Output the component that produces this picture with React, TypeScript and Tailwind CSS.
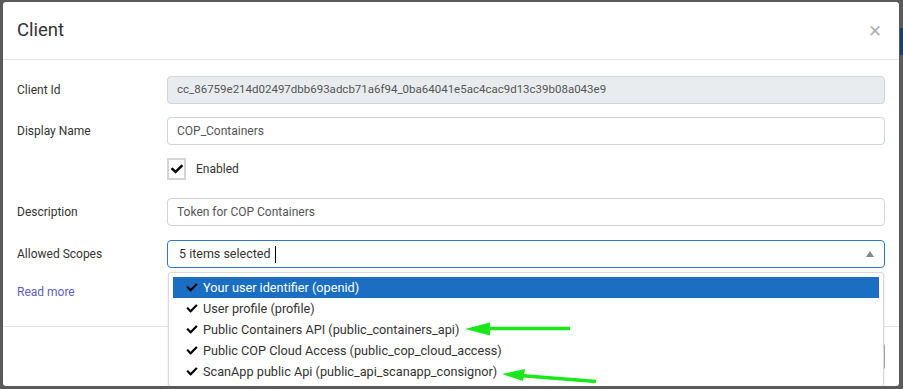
import { FaCheck } from "react-icons/fa";

const scopes = [
  "Your user identifier (openid)",
  "User profile (profile)",
  "Public Containers API (public_containers_api)",
  "Public COP Cloud Access (public_cop_cloud_access)",
  "ScanApp public Api (public_api_scanapp_consignor)",
];

const Field = ({ label, children }: { label: string; children: React.ReactNode }) => (
  <div className="flex items-center">
    <label className="w-[150px] shrink-0 text-[12px] text-[#333]">{label}</label>
    <div className="flex-1">{children}</div>
  </div>
);

const App = () => {
  return (
    <div
      className="relative w-[903px] h-[389px] overflow-hidden bg-[#5a5a5a] pl-[3px] pt-[2px]"
      style={{ fontFamily: 'Roboto, "Noto Sans", sans-serif' }}
    >
      {/* page behind the modal */}
      <div className="absolute right-0 top-[28px] h-[27px] w-[3px] bg-[#1d3f66]" />

      <div className="relative w-[896px] h-[384px] bg-white rounded-[3px] overflow-hidden">
        <div className="flex h-[58px] items-center justify-between border-b border-[#e5e5e5] pl-[14px] pr-[18px]">
          <h4 className="text-[18.5px] text-[#333]">Client</h4>
          <span className="text-[22px] leading-none text-[#b3b3b3]">×</span>
        </div>

        <div className="flex flex-col px-[14px] pt-[16px] h-[267px] border-b border-[#e5e5e5]">
          <Field label="Client Id">
            <div className="flex h-[28px] items-center rounded-[4px] border border-[#ced4da] bg-[#e9ecef] px-[9px] text-[11.5px] text-[#555]">
              cc_86759e214d02497dbb693adcb71a6f94_0ba64041e5ac4cac9d13c39b08a043e9
            </div>
          </Field>

          <div className="mt-[13px]">
            <Field label="Display Name">
              <div className="flex h-[28px] items-center rounded-[4px] border border-[#ced4da] px-[9px] text-[12px] text-[#555]">
                COP_Containers
              </div>
            </Field>
          </div>

          <div className="mt-[13px] flex h-[22px] items-center pl-[150px]">
            <div className="flex h-[22px] w-[19px] items-center justify-center border-2 border-[#d4d4d4]">
              <FaCheck className="h-[12px] w-[12px] text-black" />
            </div>
            <span className="ml-[10px] text-[12px] text-[#333]">Enabled</span>
          </div>

          <div className="mt-[18px]">
            <Field label="Description">
              <div className="flex h-[28px] items-center rounded-[4px] border border-[#ced4da] px-[9px] text-[12px] text-[#555]">
                Token for COP Containers
              </div>
            </Field>
          </div>

          <div className="mt-[14px]">
            <Field label="Allowed Scopes">
              <div className="relative flex h-[28px] items-center rounded-[4px] border border-[#2f78c8] pl-[11px] pr-[10px] text-[12.5px] text-[#333]">
                <span>5 items selected</span>
                <span className="ml-[5px] inline-block h-[17px] w-px bg-black" />
                <span className="ml-auto h-0 w-0 border-x-[4px] border-b-[6px] border-x-transparent border-b-[#888]" />
              </div>
            </Field>
          </div>

          <a className="mt-[15px] text-[12px] text-[#5a5fc4]">Read more</a>
        </div>

        <div className="flex h-[58px] items-center justify-end pr-[14px]">
          <div className="h-[27px] w-[70px] rounded-[3px] border border-[#aaa] bg-white" />
        </div>

        {/* open scope dropdown */}
        <div className="absolute left-[165px] top-[270px] w-[716px] rounded-[3px] border border-[#d9d9d9] bg-white p-[4px] pb-[4px] shadow-sm">
          {scopes.map((s, i) => (
            <div
              key={s}
              className={`flex h-[21px] items-center pl-[13px] text-[12.7px] ${
                i === 0 ? "bg-[#1b6ec2] text-white" : "text-[#333]"
              }`}
            >
              <FaCheck className="mr-[5px] h-[11px] w-[12px] text-black" />
              {s}
            </div>
          ))}
        </div>
      </div>

      {/* green annotation arrows */}
      <svg className="pointer-events-none absolute left-0 top-0" width="903" height="389">
        <line x1="570" y1="328.5" x2="484" y2="328.5" stroke="#1ae81a" strokeWidth="3.5" />
        <polygon points="465,329 490,322.5 490,335.5" fill="#1ae81a" />
        <line x1="596" y1="381.5" x2="520" y2="375.5" stroke="#1ae81a" strokeWidth="3.5" />
        <polygon points="502,374 525,369 523,381" fill="#1ae81a" />
      </svg>
    </div>
  );
};

export default App;
